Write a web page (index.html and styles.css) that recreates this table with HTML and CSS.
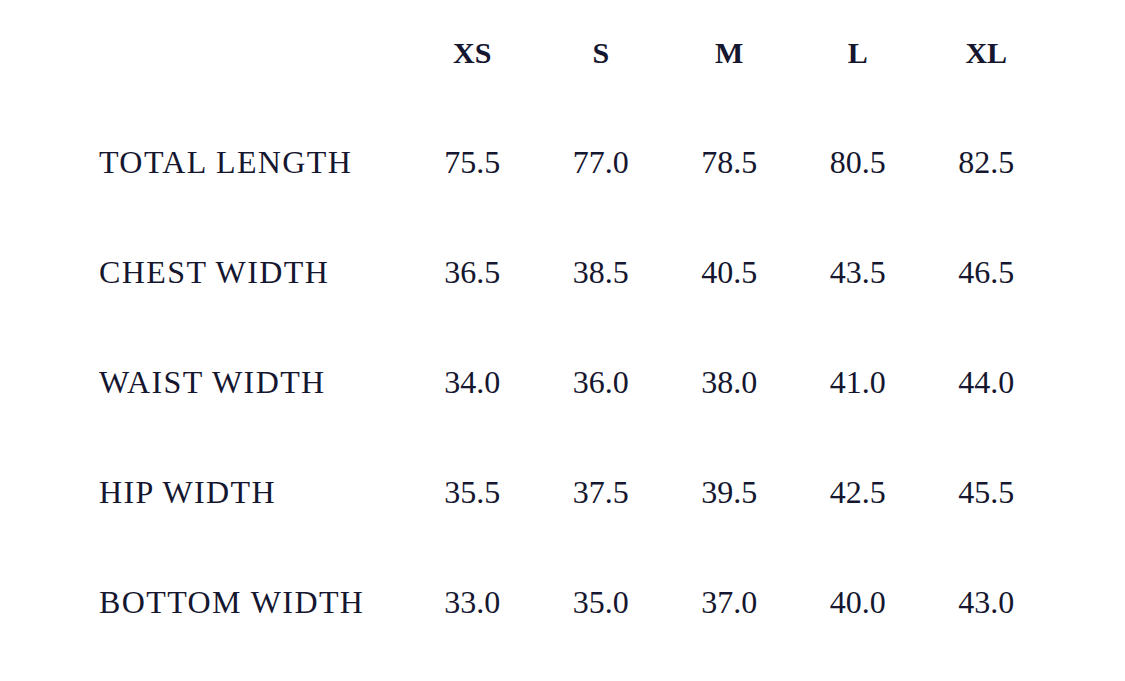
FILE: index.html
```html
<!DOCTYPE html>
<html lang="en">
<head>
<meta charset="utf-8">
<title>Size chart</title>
<link rel="stylesheet" href="styles.css">
</head>
<body>
<div class="chart">
  <div class="row head">
    <div class="label"></div>
    <div class="cell">XS</div>
    <div class="cell">S</div>
    <div class="cell">M</div>
    <div class="cell">L</div>
    <div class="cell">XL</div>
  </div>
  <div class="row">
    <div class="label">TOTAL LENGTH</div>
    <div class="cell">75.5</div>
    <div class="cell">77.0</div>
    <div class="cell">78.5</div>
    <div class="cell">80.5</div>
    <div class="cell">82.5</div>
  </div>
  <div class="row">
    <div class="label">CHEST WIDTH</div>
    <div class="cell">36.5</div>
    <div class="cell">38.5</div>
    <div class="cell">40.5</div>
    <div class="cell">43.5</div>
    <div class="cell">46.5</div>
  </div>
  <div class="row">
    <div class="label">WAIST WIDTH</div>
    <div class="cell">34.0</div>
    <div class="cell">36.0</div>
    <div class="cell">38.0</div>
    <div class="cell">41.0</div>
    <div class="cell">44.0</div>
  </div>
  <div class="row">
    <div class="label">HIP WIDTH</div>
    <div class="cell">35.5</div>
    <div class="cell">37.5</div>
    <div class="cell">39.5</div>
    <div class="cell">42.5</div>
    <div class="cell">45.5</div>
  </div>
  <div class="row">
    <div class="label">BOTTOM WIDTH</div>
    <div class="cell">33.0</div>
    <div class="cell">35.0</div>
    <div class="cell">37.0</div>
    <div class="cell">40.0</div>
    <div class="cell">43.0</div>
  </div>
</div>
</body>
</html>
```

FILE: styles.css
```css
html, body {
  margin: 0;
  padding: 0;
  background: #ffffff;
}

body {
  width: 1125px;
  height: 681px;
  overflow: hidden;
  font-family: "Liberation Serif", "Times New Roman", serif;
  color: #15162f;
}

.chart {
  padding-left: 99px;
  display: flex;
  flex-direction: column;
}

.row {
  display: grid;
  grid-template-columns: 309px repeat(5, 128.5px);
  height: 110px;
  align-items: center;
  font-size: 32px;
  line-height: 1;
}

.row.head {
  height: 105px;
  padding-bottom: 2px;
  font-size: 30px;
  font-weight: bold;
}

.label {
  white-space: nowrap;
  letter-spacing: 1.4px;
}

.cell {
  text-align: center;
}
```
